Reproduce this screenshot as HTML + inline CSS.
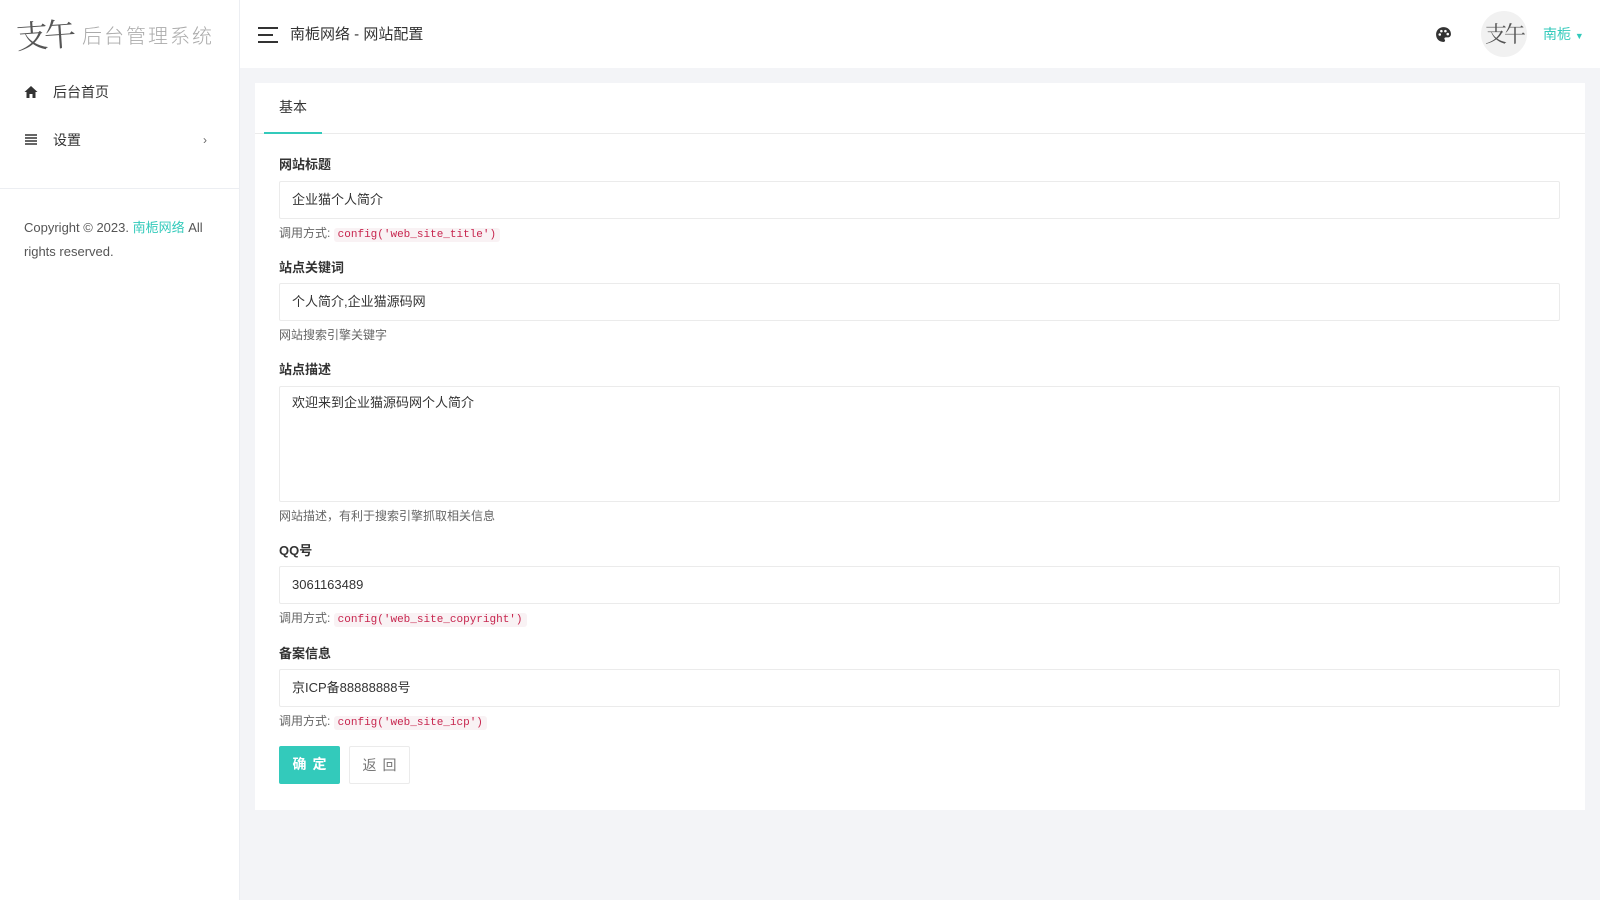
<!DOCTYPE html>
<html><head><meta charset="utf-8"><style>
*{box-sizing:border-box;margin:0;padding:0}
body{width:1600px;height:900px;background:#f3f4f7;font-family:"Liberation Sans","Noto Sans CJK SC",sans-serif;font-size:14px;color:#333;position:relative;overflow:hidden}
.side{position:absolute;left:0;top:0;width:240px;height:900px;background:#fff;border-right:1px solid #eceef2}
.logo{position:absolute;left:16px;top:12px;height:44px;display:flex;align-items:center}
.logo .sig{font-size:32px;color:#555;font-family:"Noto Serif CJK SC",serif;letter-spacing:-4px;transform:rotate(-4deg)}
.logo .t{font-size:20px;color:#aaa;margin-left:10px;letter-spacing:2px;font-weight:300}
.nav{position:absolute;left:0;width:240px;height:40px;display:flex;align-items:center;padding-left:24px;font-size:14px}
.nav .ic{width:14px;margin-right:15px}
.divider{position:absolute;left:0;top:188px;width:240px;border-top:1px solid #eceef2}
.copy{position:absolute;left:24px;top:216px;width:200px;font-size:13px;line-height:24px;color:#555}
.copy a{color:#33cabb;text-decoration:none}
.head{position:absolute;left:240px;top:0;width:1360px;height:68px;background:#fff}
.ham{position:absolute;left:18px;top:27px;width:20px}
.ham i{display:block;height:2px;background:#333;margin-bottom:5px}
.title{position:absolute;left:50px;top:23px;font-size:15px;color:#333}
.card{position:absolute;left:255px;top:83px;width:1330px;height:727px;background:#fff}
.tabbar{height:51px;border-bottom:1px solid #ebebeb;position:relative}
.tab{position:absolute;left:9px;top:0;width:58px;height:51px;border-bottom:2px solid #33cabb;text-align:center;line-height:48px;font-size:14px}
.lbl{position:absolute;left:24px;font-weight:bold;font-size:13px;color:#333}
.inp{position:absolute;left:24px;width:1281px;height:38px;border:1px solid #ebebeb;border-radius:2px;padding:0 12px;line-height:36px;font-size:13px;color:#333}
.help{position:absolute;left:24px;font-size:12px;color:#666;line-height:18px}
.help code{font-family:"Liberation Mono",monospace;color:#c7254e;background:#f9f2f4;padding:1px 4px;border-radius:3px;font-size:11px}
.btn{position:absolute;top:663px;height:38px;line-height:36px;text-align:center;font-size:14px;border-radius:2px;letter-spacing:6px;text-indent:6px}
</style></head><body>
<div class="side">
 <div class="logo"><span class="sig">支午</span><span class="t">后台管理系统</span></div>
 <div class="nav" style="top:72px"><svg class="ic" viewBox="0 0 14 14" width="14" height="14"><path d="M7 1L0.5 7H2.5V13H5.5V9H8.5V13H11.5V7H13.5Z" fill="#333"/></svg>后台首页</div>
 <div class="nav" style="top:120px"><svg class="ic" viewBox="0 0 14 14" width="14" height="14"><path d="M1 2h12M1 5h12M1 8h12M1 11h12" stroke="#333" stroke-width="1.6"/></svg>设置<span style="position:absolute;left:203px;color:#666;font-size:12px">›</span></div>
 <div class="divider"></div>
 <div class="copy">Copyright © 2023. <a>南栀网络</a> All rights reserved.</div>
</div>
<div class="head">
 <div class="ham"><i></i><i style="width:15px"></i><i></i></div>
 <div class="title">南栀网络 - 网站配置</div>
 <svg style="position:absolute;left:1195px;top:26px" width="17" height="17" viewBox="0 0 16 16"><path d="M8 1C4 1 1 4 1 8s3 7 7 7c1 0 1.5-.6 1.5-1.3 0-.8-.7-1-.7-1.8 0-.7.6-1.2 1.4-1.2H12c2 0 3-1.4 3-3.2C15 3.8 12 1 8 1z" fill="#333"/><circle cx="4.5" cy="8" r="1.2" fill="#fff"/><circle cx="6" cy="4.8" r="1.2" fill="#fff"/><circle cx="9.8" cy="4.8" r="1.2" fill="#fff"/><circle cx="12" cy="7.6" r="1.2" fill="#fff"/></svg>
 <div style="position:absolute;left:1241px;top:11px;width:46px;height:46px;border-radius:50%;background:#f1f1f1;font-family:'Noto Serif CJK SC',serif;font-size:22px;color:#555;line-height:46px;text-align:center;letter-spacing:-3px">支午</div>
 <div style="position:absolute;left:1303px;top:24px;color:#33cabb;font-size:14px">南栀 <span style="font-size:9px">▼</span></div>
</div>
<div class="card">
 <div class="tabbar"><div class="tab">基本</div></div>
 <div class="lbl" style="top:71px">网站标题</div>
 <div class="inp" style="top:98px">企业猫个人简介</div>
 <div class="help" style="top:141px">调用方式: <code>config('web_site_title')</code></div>
 <div class="lbl" style="top:174px">站点关键词</div>
 <div class="inp" style="top:200px">个人简介,企业猫源码网</div>
 <div class="help" style="top:243px">网站搜索引擎关键字</div>
 <div class="lbl" style="top:276px">站点描述</div>
 <div class="inp" style="top:303px;height:116px;line-height:30px;padding-top:1px">欢迎来到企业猫源码网个人简介</div>
 <div class="help" style="top:424px">网站描述，有利于搜索引擎抓取相关信息</div>
 <div class="lbl" style="top:457px">QQ号</div>
 <div class="inp" style="top:483px">3061163489</div>
 <div class="help" style="top:526px">调用方式: <code>config('web_site_copyright')</code></div>
 <div class="lbl" style="top:560px">备案信息</div>
 <div class="inp" style="top:586px">京ICP备88888888号</div>
 <div class="help" style="top:629px">调用方式: <code>config('web_site_icp')</code></div>
 <div class="btn" style="left:24px;width:61px;background:#33cabb;color:#fff;font-weight:bold">确定</div>
 <div class="btn" style="left:94px;width:61px;border:1px solid #ebebeb;color:#777">返回</div>
</div>
</body></html>
